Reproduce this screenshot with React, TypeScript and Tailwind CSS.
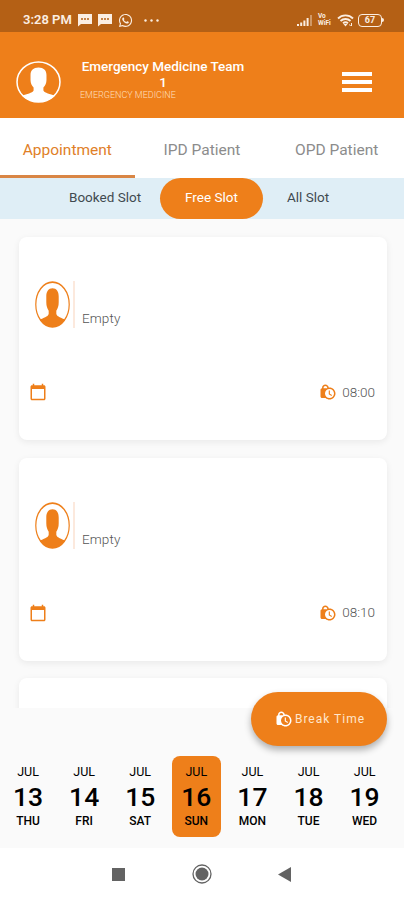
import { FaWhatsapp } from "react-icons/fa";
import { MdCalendarToday, MdLockClock } from "react-icons/md";

const tabs = ["Appointment", "IPD Patient", "OPD Patient"];

const slots = ["08:00", "08:10"];

const days = [
  { date: 13, day: "THU" },
  { date: 14, day: "FRI" },
  { date: 15, day: "SAT" },
  { date: 16, day: "SUN" },
  { date: 17, day: "MON" },
  { date: 18, day: "TUE" },
  { date: 19, day: "WED" },
];

function Avatar({ className }: { className: string }) {
  return (
    <svg viewBox="0 0 44 42" preserveAspectRatio="none" fill="none" className={className} aria-hidden>
      <ellipse cx="22" cy="21" rx="21" ry="20" stroke="currentColor" strokeWidth="1.5" />
      <path
        d="M22 6.500c-5 0-7.800 2.800-7.800 7.500v5c0 3.500 1.200 5.500 3 7.500v3c-1.200 2.700-6.700 3.300-11 5.200C10.500 39 16 41 22 41s11.500-2 15.800-6.300c-4.300-1.900-9.800-2.500-11-5.200v-3c1.800-2 3-4 3-7.500v-5c0-4.700-2.800-7.500-7.800-7.500z"
        fill="currentColor"
      />
    </svg>
  );
}

function ChatIcon() {
  return (
    <svg width="14" height="13" viewBox="0 0 14 13" fill="none" aria-hidden>
      <path d="M0 0h14v10H3L0 12.500z" fill="#fbeee2" />
      <path d="M3 5h2M6 5h2M9 5h2" stroke="#b46015" strokeWidth="1.500" />
    </svg>
  );
}

function StatusBar() {
  return (
    <div className="flex h-8 items-center bg-[#b46015] pt-2 pl-[23px] pr-[20px] text-[#fbeee2]">
      <span className="w-[55px] whitespace-nowrap text-[13px] font-semibold">3:28 PM</span>
      <div className="flex items-center gap-[6px]">
        <ChatIcon />
        <ChatIcon />
        <FaWhatsapp size={15} />
      </div>
      <svg className="ml-[11px]" width="15" height="3" viewBox="0 0 15 3" fill="currentColor" aria-hidden>
        <circle cx="1.500" cy="1.500" r="1.200" />
        <circle cx="7.500" cy="1.500" r="1.200" />
        <circle cx="13.500" cy="1.500" r="1.200" />
      </svg>
      <div className="ml-auto flex items-center">
        <svg width="16" height="11" viewBox="0 0 16 11" fill="currentColor" aria-hidden>
          <path d="M0 9h2v2H0zM3.200 7.500h2V11h-2zM6.400 5.500h2V11h-2zM9.600 3h2v8h-2z" />
          <path d="M13 0h2v11h-2z" opacity=".4" />
        </svg>
        <div className="ml-[5px] flex w-[14px] flex-col text-[6.500px] leading-[7px] font-bold">
          <span>Vo</span>
          <span>WiFi</span>
        </div>
        <svg className="ml-[5px]" width="17" height="13" viewBox="0 0 17 13" fill="none" stroke="currentColor" aria-hidden>
          <path d="M1 4.500C5 .4 12 .4 16 4.500M3.500 7c2.800-2.700 7.200-2.700 10 0M6 9.300c1.400-1.200 3.600-1.200 5 0" strokeWidth="1.800" />
          <path d="M6.500 10h4l-2 2.500z" fill="currentColor" stroke="none" />
          <path d="M14.500 9v3M12.500 10.500l1 1.500" strokeWidth="1" />
        </svg>
        <div className="ml-[4px] flex h-[13px] w-[24px] items-center justify-center rounded-[4px] border-[1.500px] border-current text-[9px] font-bold leading-none">
          67
        </div>
        <span className="h-1 w-[2px] rounded-r bg-current" />
      </div>
    </div>
  );
}

function Header() {
  return (
    <header className="flex h-[86px] items-start bg-[#ee7f1a] text-white">
      <Avatar className="mt-[29px] ml-[16px] h-[42px] w-[45px]" />
      <div className="mt-[26px] ml-[19px] w-[166px]">
        <h1 className="text-center text-[13.500px] leading-4 font-medium tracking-[-0.02px] whitespace-nowrap">
          Emergency Medicine Team
          <br />1
        </h1>
        <p className="mt-px text-[9px] leading-[9px] font-light whitespace-nowrap text-[#ffdfbd]">EMERGENCY MEDICINE</p>
      </div>
      <button className="mt-[40px] ml-[96px] flex w-[30px] flex-col gap-1" aria-label="Menu">
        <span className="h-1 w-full bg-white" />
        <span className="h-1 w-full bg-white" />
        <span className="h-1 w-full bg-white" />
      </button>
    </header>
  );
}

function SlotCard({ time }: { time: string }) {
  return (
    <div className="flex h-[203px] shrink-0 flex-col rounded-lg bg-white pt-[44px] shadow-[0_2px_7px_rgba(0,0,0,0.07)]">
      <div className="flex h-[48px] pl-4">
        <Avatar className="h-[47px] w-[35px] text-[#ee7f1a]" />
        <span className="ml-[3px] h-[47px] w-[2px] bg-[#fce9dd]" />
        <span className="mt-[28px] ml-[7px] text-[13.500px] leading-[18px] font-light tracking-[0.1px] text-[#555]">Empty</span>
      </div>
      <div className="mt-[54px] flex h-[18px] items-center pr-3 pl-[10px] text-[#ee7f1a]">
        <MdCalendarToday size={18} />
        <MdLockClock size={18} className="ml-auto" />
        <span className="ml-[5px] text-[13.500px] font-light text-[#555]">{time}</span>
      </div>
    </div>
  );
}

export default function App() {
  return (
    <div className="relative flex h-[900px] w-[404px] flex-col overflow-hidden bg-[#fafafa] font-[Roboto,sans-serif]">
      <StatusBar />
      <Header />

      <nav className="flex h-[60px] bg-white">
        {tabs.map((tab, i) => (
          <button
            key={tab}
            className={`flex-1 border-b-[3px] pt-[8px] text-[15.500px] whitespace-nowrap ${
              i === 0 ? "border-[#d98645] text-[#df8028]" : "border-transparent text-[#8c8c8c]"
            }`}
          >
            {tab}
          </button>
        ))}
      </nav>

      <div className="flex h-[41px] items-center bg-[#dfeef6] pl-[69px] text-[13.500px] text-[#3f4a50]">
        <button className="mb-[2px] w-[91px] text-left">Booked Slot</button>
        <button className="h-[41px] w-[103px] rounded-full bg-[#ee7f1a] pb-[2px] text-white">Free Slot</button>
        <button className="mb-[2px] ml-[24px]">All Slot</button>
      </div>

      <main className="flex h-[489px] flex-col gap-[17.500px] overflow-hidden pt-[18px] pr-[17px] pl-[19px]">
        {slots.map((time) => (
          <SlotCard key={time} time={time} />
        ))}
        <div className="h-[203px] shrink-0 rounded-lg bg-white shadow-[0_2px_7px_rgba(0,0,0,0.07)]" />
      </main>

      <div className="mt-[48px] flex h-[92px] text-black">
        {days.map(({ date, day }) => (
          <button
            key={date}
            className={`mx-[3.300px] flex h-[81px] w-[49.500px] shrink-0 flex-col items-center rounded-lg pt-[8px] ${
              date === 16 ? "bg-[#ee7f1a]" : ""
            }`}
          >
            <span className="text-[12.500px] leading-[15px]">JUL</span>
            <span className="mt-[3px] text-[26.500px] leading-[30px] font-medium">{date}</span>
            <span className="mt-[2px] text-[12px] leading-[15px] font-medium">{day}</span>
          </button>
        ))}
      </div>

      <div className="flex flex-1 items-center bg-white text-[#636363]">
        <span className="ml-[112px] h-[13px] w-[13px] bg-current" />
        <svg className="ml-[67px]" width="20" height="20" viewBox="0 0 20 20" fill="none" aria-hidden>
          <circle cx="10" cy="10" r="9" stroke="currentColor" strokeWidth="1.300" />
          <circle cx="10" cy="10" r="6.500" fill="currentColor" />
        </svg>
        <svg className="ml-[66px]" width="13" height="15" viewBox="0 0 13 15" fill="currentColor" aria-hidden>
          <path d="M13 0v15L0 7.500z" />
        </svg>
      </div>

      <button className="absolute top-[692px] left-[251px] flex h-[54px] w-[136px] items-center justify-center gap-[2px] rounded-full bg-[#ee7f1a] pl-[2px] text-[12px] tracking-[1px] text-[#ffe6cc] shadow-[0_4px_7px_rgba(0,0,0,0.3)]">
        <MdLockClock size={18} className="text-white" />
        Break Time
      </button>
    </div>
  );
}
